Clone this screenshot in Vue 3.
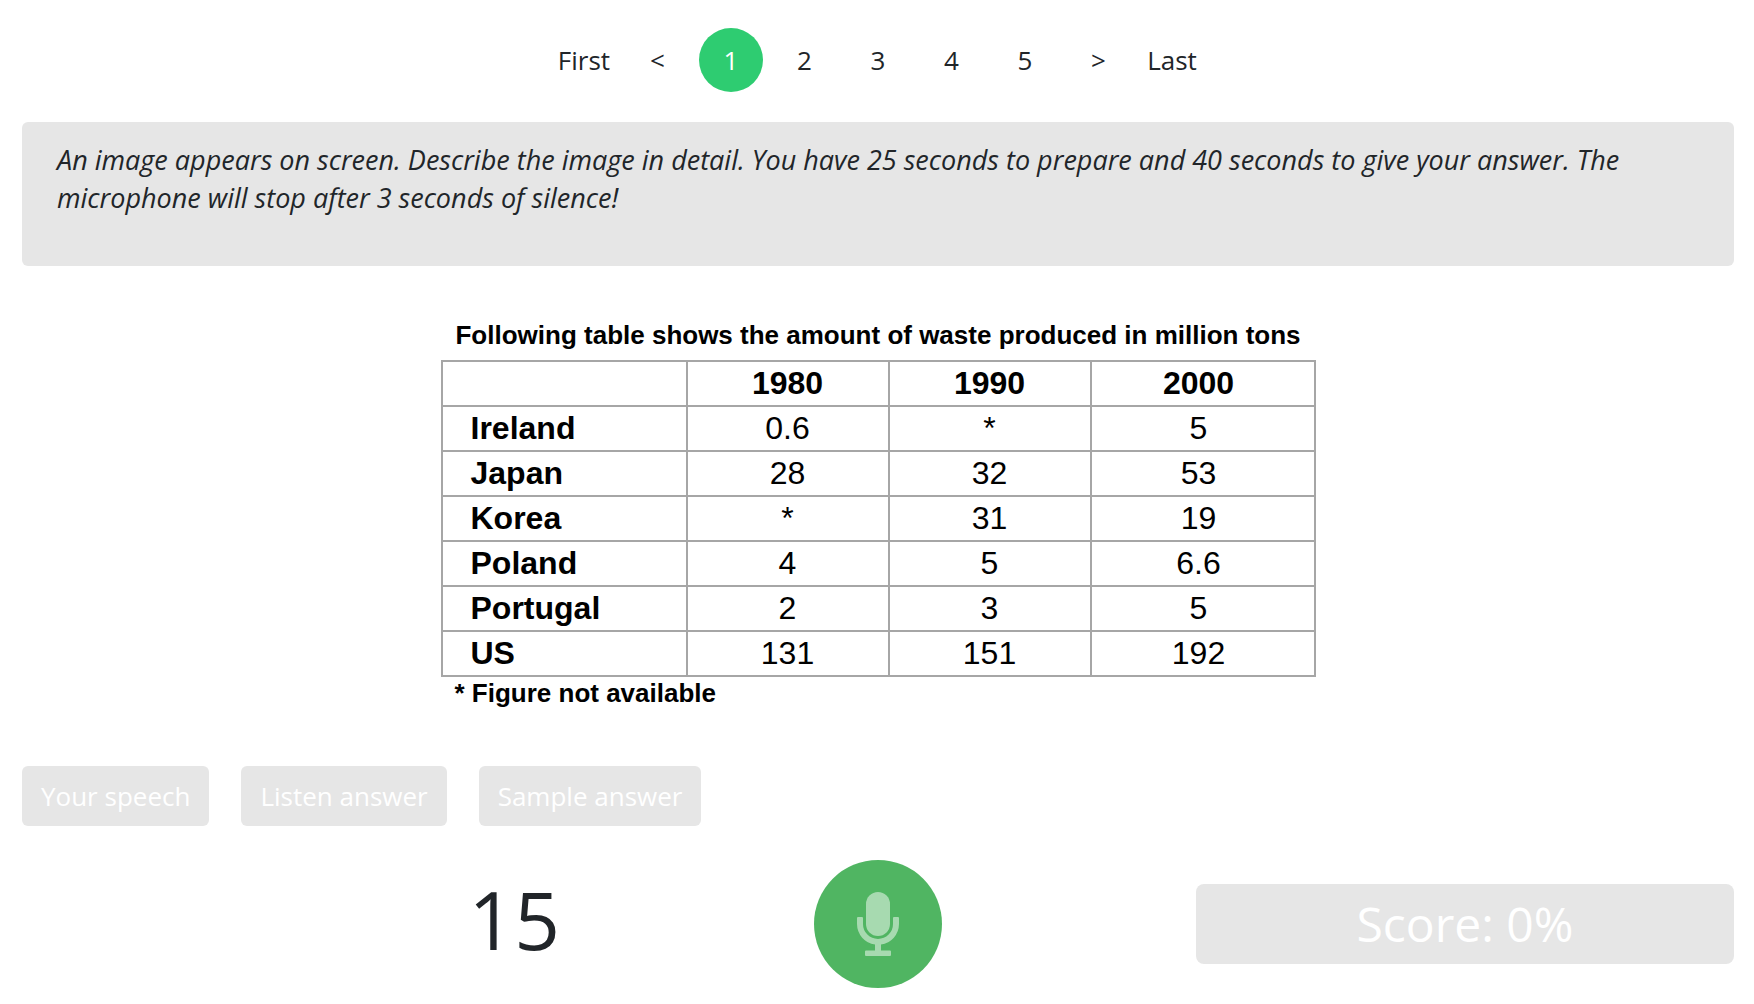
<script setup>
import { ref } from 'vue'

const pages = ['First', '<', '1', '2', '3', '4', '5', '>', 'Last']
const current = ref('1')

const years = ['1980', '1990', '2000']
const rows = [
  { country: 'Ireland', values: ['0.6', '*', '5'] },
  { country: 'Japan', values: ['28', '32', '53'] },
  { country: 'Korea', values: ['*', '31', '19'] },
  { country: 'Poland', values: ['4', '5', '6.6'] },
  { country: 'Portugal', values: ['2', '3', '5'] },
  { country: 'US', values: ['131', '151', '192'] },
]
const actions = ['Your speech', 'Listen answer', 'Sample answer']
</script>

<template>
  <main class="page">
    <nav class="pagination" aria-label="Questions">
      <a
        v-for="page in pages"
        :key="page"
        href="#"
        class="page-link"
        :class="{ active: page === current }"
        @click.prevent
      >{{ page }}</a>
    </nav>

    <section class="instructions">
      <p>
        An image appears on screen. Describe the image in detail. You have 25 seconds to prepare and 40 seconds to give
        your answer. The microphone will stop after 3 seconds of silence!
      </p>
    </section>

    <figure class="question">
      <table>
        <caption>Following table shows the amount of waste produced in million tons</caption>
        <colgroup>
          <col class="col-country" />
          <col class="col-year" />
          <col class="col-year" />
          <col />
        </colgroup>
        <thead>
          <tr>
            <td></td>
            <th v-for="year in years" :key="year" scope="col">{{ year }}</th>
          </tr>
        </thead>
        <tbody>
          <tr v-for="row in rows" :key="row.country">
            <th scope="row">{{ row.country }}</th>
            <td v-for="(value, i) in row.values" :key="i">{{ value }}</td>
          </tr>
        </tbody>
      </table>
      <figcaption>* Figure not available</figcaption>
    </figure>

    <div class="actions">
      <button v-for="action in actions" :key="action" type="button" class="action">{{ action }}</button>
    </div>

    <div class="recorder">
      <div class="timer">15</div>
      <button type="button" class="mic" aria-label="Record">
        <svg width="42" height="64" viewBox="0 0 42 64" aria-hidden="true">
          <rect x="9" y="0" width="24" height="44" rx="12" />
          <path
            d="M1 25H5Q6 25 6 26V32A15 15 0 0 0 36 32V26Q36 25 37 25H41Q42 25 42 26V32A21 21 0 0 1 24 52.6V58.5H33Q34 58.5 34 59.5V63Q34 64 33 64H9Q8 64 8 63V59.5Q8 58.5 9 58.5H18V52.6A21 21 0 0 1 0 32V26Q0 25 1 25Z"
          />
        </svg>
      </button>
      <div class="score">Score: 0%</div>
    </div>
  </main>
</template>

<style>
body {
  margin: 0;
  background: #fff;
}
</style>

<style scoped>
.page {
  box-sizing: border-box;
  padding: 28px 20px 16px 22px;
  color: #212529;
  font-family: 'Open Sans', sans-serif;
  font-size: 26px;
  line-height: 38px;
}

.pagination {
  display: flex;
  justify-content: space-between;
  width: 652px;
  margin: 0 auto;
}

.page-link {
  display: flex;
  align-items: center;
  justify-content: center;
  width: 64px;
  height: 64px;
  border-radius: 50%;
  color: #212529;
  text-decoration: none;
}

.page-link.active {
  background: #2ecc71;
  color: #fff;
}

.instructions {
  min-height: 106px;
  margin-top: 30px;
  padding: 19px 35px;
  border-radius: 6px;
  background: #e6e6e6;
  font-size: 27px;
  font-style: italic;
}

.instructions p {
  margin: 0;
}

.question {
  width: 875px;
  margin: 49px auto 0;
  color: #000;
  font-family: 'Liberation Sans', Arial, sans-serif;
}

table {
  width: 100%;
  border-collapse: collapse;
  table-layout: fixed;
  font-size: 32px;
  line-height: 43px;
}

caption {
  padding-bottom: 5px;
  font-size: 26px;
  font-weight: 700;
  line-height: 40px;
  white-space: nowrap;
}

.col-country {
  width: 245px;
}

.col-year {
  width: 202px;
}

th,
td {
  padding: 0;
  border: 2px solid #a6a6a6;
  text-align: center;
}

tr > :last-child {
  padding-right: 8px;
}

tbody th {
  padding-left: 28px;
  text-align: left;
}

figcaption {
  padding-left: 14px;
  font-size: 26px;
  font-weight: 700;
  line-height: 32px;
}

.actions {
  display: flex;
  gap: 32px;
  margin-top: 57px;
}

.action {
  height: 60px;
  padding: 0 19px;
  border: 0;
  border-radius: 6px;
  background: #e6e6e6;
  color: #fff;
  font: inherit;
}

.recorder {
  display: grid;
  grid-template-columns: 11fr 13fr 11fr;
  align-items: center;
  margin-top: 34px;
}

.timer {
  padding-bottom: 10px;
  font-size: 80px;
  line-height: 110px;
  text-align: right;
}

.mic {
  display: flex;
  align-items: center;
  justify-content: center;
  justify-self: center;
  width: 128px;
  height: 128px;
  padding: 0;
  border: 0;
  border-radius: 50%;
  background: #50b562;
}

.mic svg {
  fill: #a7dab0;
}

.score {
  border-radius: 8px;
  background: #e6e6e6;
  color: #fff;
  font-size: 48px;
  line-height: 80px;
  text-align: center;
}
</style>
